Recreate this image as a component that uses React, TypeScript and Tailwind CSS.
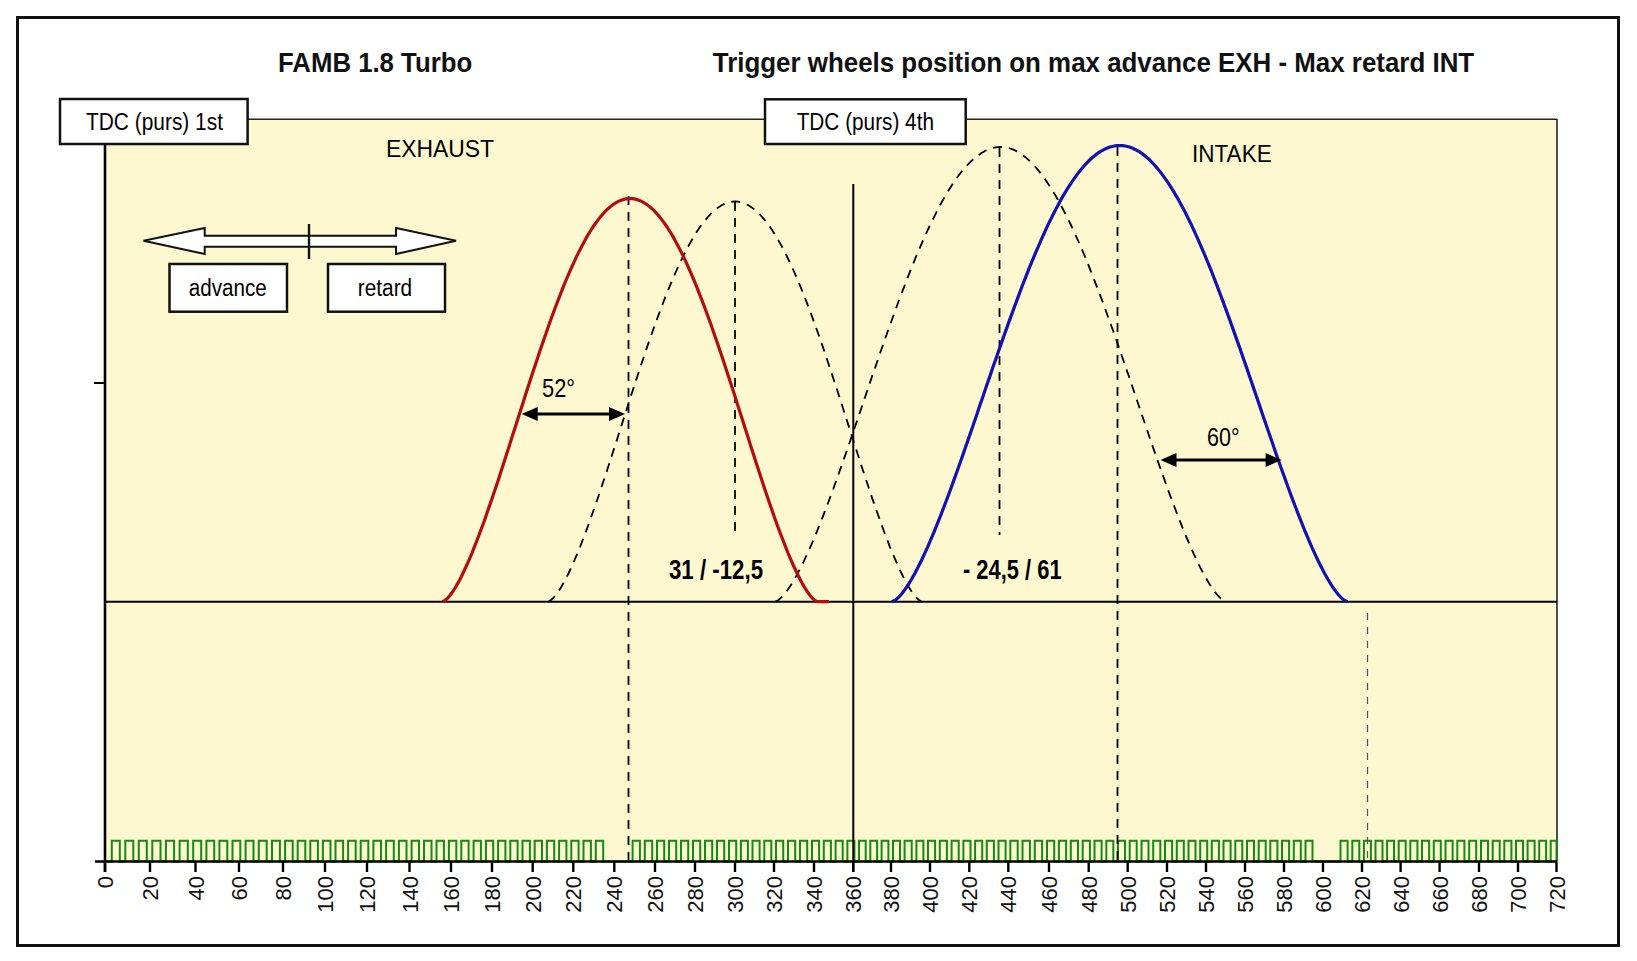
const TICKS = [
  105, 150, 195.5, 239, 283, 325, 367, 409.5, 451, 492, 532.7, 573.3, 614.3, 655, 695, 735, 774, 814, 853.3,
  891, 930, 969.3, 1008.3, 1049, 1088.7, 1127.7, 1167, 1206, 1245, 1284, 1323, 1362, 1400.6, 1439.6, 1479, 1518,
  1556.5,
];

const BASE = 601.7;
const AXIS = 861.5;
const NARROW = "'Liberation Sans Narrow', 'Arial Narrow', 'Liberation Sans', Arial, sans-serif";
const SANS = "'Liberation Sans', Arial, sans-serif";

// degrees -> px (the scanned axis is not quite linear)
const xOf = (deg: number) => {
  const i = Math.min(Math.floor(deg / 20), TICKS.length - 2);
  const f = (deg - i * 20) / 20;
  return TICKS[i] + (TICKS[i + 1] - TICKS[i]) * f;
};

const bell = (cx: number, hw: number, peakY: number, p = 1.5) => {
  const pts: string[] = [];
  const n = 140;
  for (let i = 0; i <= n; i++) {
    const t = i / n;
    const x = cx - hw + 2 * hw * t;
    const y = BASE - (BASE - peakY) * Math.pow(Math.sin(Math.PI * t), p);
    pts.push(`${i === 0 ? "M" : "L"}${x.toFixed(1)},${y.toFixed(1)}`);
  }
  return pts.join(" ");
};

const teethPath = () => {
  let d = `M${xOf(0)},${AXIS}`;
  for (let k = 0; k < 120; k++) {
    if (k === 39 || k === 40 || k === 99 || k === 100) continue;
    const a = xOf(3 + 6 * k);
    const b = xOf(Math.min(3 + 6 * k + 3.6, 720));
    d += ` L${a.toFixed(1)},${AXIS} L${a.toFixed(1)},840.7 L${b.toFixed(1)},840.7 L${b.toFixed(1)},${AXIS}`;
  }
  return d + ` L${xOf(720)},${AXIS}`;
};

const Measure = ({ x1, x2, y }: { x1: number; x2: number; y: number }) => (
  <g fill="#000">
    <line x1={x1 + 12} x2={x2 - 12} y1={y} y2={y} stroke="#000" strokeWidth={3} />
    <polygon points={`${x1},${y} ${x1 + 16},${y - 7} ${x1 + 16},${y + 7}`} />
    <polygon points={`${x2},${y} ${x2 - 16},${y - 7} ${x2 - 16},${y + 7}`} />
  </g>
);

const Label = ({ x, y, w, h, text, tx, tw }: { x: number; y: number; w: number; h: number; text: string; tx: number; tw: number }) => (
  <g>
    <rect x={x} y={y} width={w} height={h} fill="#fff" stroke="#111" strokeWidth={2.5} />
    <text x={tx} y={y + h / 2 + 8.3} fontFamily={NARROW} fontSize={23} textLength={tw} lengthAdjust="spacingAndGlyphs">
      {text}
    </text>
  </g>
);

const Chart = () => (
  <svg viewBox="19 89 1598 855" className="w-[1598px] h-[855px] block">
    <rect x={105} y={119.3} width={1451.5} height={742} fill="#fdf8cf" />
    <line x1={247} x2={1557} y1={119.3} y2={119.3} stroke="#222" strokeWidth={1.6} />
    <line x1={1557} x2={1557} y1={119} y2={861} stroke="#222" strokeWidth={1.6} />

    {/* lift baseline */}
    <line x1={105} x2={1557} y1={BASE} y2={BASE} stroke="#000" strokeWidth={2} />

    {/* trigger wheel */}
    <path d={teethPath()} fill="none" stroke="#138a13" strokeWidth={2} />

    {/* reference lines */}
    <line x1={628.5} x2={628.5} y1={196} y2={861} stroke="#000" strokeWidth={1.8} strokeDasharray="9 7" />
    <line x1={735} x2={735} y1={202} y2={535} stroke="#000" strokeWidth={1.8} strokeDasharray="9 7" />
    <line x1={999.5} x2={999.5} y1={148} y2={535} stroke="#000" strokeWidth={1.8} strokeDasharray="9 7" />
    <line x1={1117.5} x2={1117.5} y1={147} y2={861} stroke="#000" strokeWidth={1.8} strokeDasharray="9 7" />
    <line x1={1367.5} x2={1367.5} y1={613} y2={861} stroke="#555" strokeWidth={1.2} strokeDasharray="7 7" />
    <line x1={853.3} x2={853.3} y1={184} y2={872} stroke="#000" strokeWidth={2} />

    {/* cam lifts */}
    <path d={bell(735, 187, 201.5)} fill="none" stroke="#000" strokeWidth={1.8} strokeDasharray="9 7" />
    <path d={bell(1000.5, 225.5, 147)} fill="none" stroke="#000" strokeWidth={1.8} strokeDasharray="9 7" />
    <path d={bell(630, 187.5, 198.5) + ` L829,${BASE}`} fill="none" stroke="#b30d0d" strokeWidth={3.2} />
    <path d={bell(1119.7, 227.7, 145.5)} fill="none" stroke="#1212b2" strokeWidth={3.2} />

    {/* axes */}
    <line x1={105} x2={105} y1={144} y2={872} stroke="#000" strokeWidth={2.6} />
    <line x1={95} x2={1557} y1={AXIS} y2={AXIS} stroke="#000" strokeWidth={2.6} />
    <line x1={94} x2={105} y1={383} y2={383} stroke="#000" strokeWidth={2} />
    {TICKS.map((x, i) => (
      <g key={i}>
        <line x1={x} x2={x} y1={AXIS} y2={872} stroke="#000" strokeWidth={2.4} />
        <text
          transform={`translate(${(x + 8).toFixed(1)},876) rotate(-90)`}
          textAnchor="end"
          fontFamily={SANS}
          fontSize={22}
          fill="#111"
        >
          {i * 20}
        </text>
      </g>
    ))}

    {/* boxes */}
    <Label x={60} y={99} w={187.6} h={45} text="TDC (purs) 1st" tx={86} tw={137} />
    <Label x={765} y={99.3} w={200.7} h={44.7} text="TDC (purs) 4th" tx={796.7} tw={137.3} />
    <Label x={169.5} y={264} w={117.5} h={47.7} text="advance" tx={188.7} tw={78} />
    <Label x={328} y={264} w={117} h={47.7} text="retard" tx={357.8} tw={54.4} />

    {/* advance / retard arrow */}
    <polygon
      points="143.5,240.7 204.7,228 204.7,235.7 396,235.7 396,228 456,240.7 396,254 396,246.7 204.7,246.7 204.7,254"
      fill="#fff"
      stroke="#111"
      strokeWidth={2}
      strokeLinejoin="miter"
    />
    <line x1={309} x2={309} y1={224} y2={259} stroke="#111" strokeWidth={2.4} />

    <text x={386} y={156.8} fontFamily={NARROW} fontSize={24} textLength={108} lengthAdjust="spacingAndGlyphs">
      EXHAUST
    </text>
    <text x={1192} y={161.6} fontFamily={NARROW} fontSize={24} textLength={79.7} lengthAdjust="spacingAndGlyphs">
      INTAKE
    </text>

    <Measure x1={521.7} x2={625} y={414} />
    <text x={542} y={397} fontFamily={NARROW} fontSize={25} textLength={33} lengthAdjust="spacingAndGlyphs">
      52°
    </text>
    <Measure x1={1160.5} x2={1281.6} y={460} />
    <text x={1207} y={445.7} fontFamily={NARROW} fontSize={25} textLength={32.5} lengthAdjust="spacingAndGlyphs">
      60°
    </text>

    <text x={669} y={579} fontFamily={NARROW} fontWeight={700} fontSize={27} textLength={94} lengthAdjust="spacingAndGlyphs">
      31 / -12,5
    </text>
    <text x={963} y={579} fontFamily={NARROW} fontWeight={700} fontSize={27} textLength={98.6} lengthAdjust="spacingAndGlyphs">
      - 24,5 / 61
    </text>
  </svg>
);

export default function App() {
  return (
    <div className="w-[1637px] h-[961px] bg-white pt-[16px] pl-[16px]">
      <div className="w-[1604px] h-[931px] border-[3px] border-[#111] flex flex-col">
        <div className="h-[70px] flex items-start pt-[30px] text-[28px] leading-none font-bold text-[#111] whitespace-nowrap font-['Liberation_Sans_Narrow','Arial_Narrow','Liberation_Sans',sans-serif]">
          <div className="ml-[251px] w-[200px] text-center scale-x-[0.92]">FAMB 1.8 Turbo</div>
          <div className="ml-[193px] w-[861px] text-center scale-x-[0.925]">
            Trigger wheels position on max advance EXH - Max retard INT
          </div>
        </div>
        <Chart />
      </div>
    </div>
  );
}
